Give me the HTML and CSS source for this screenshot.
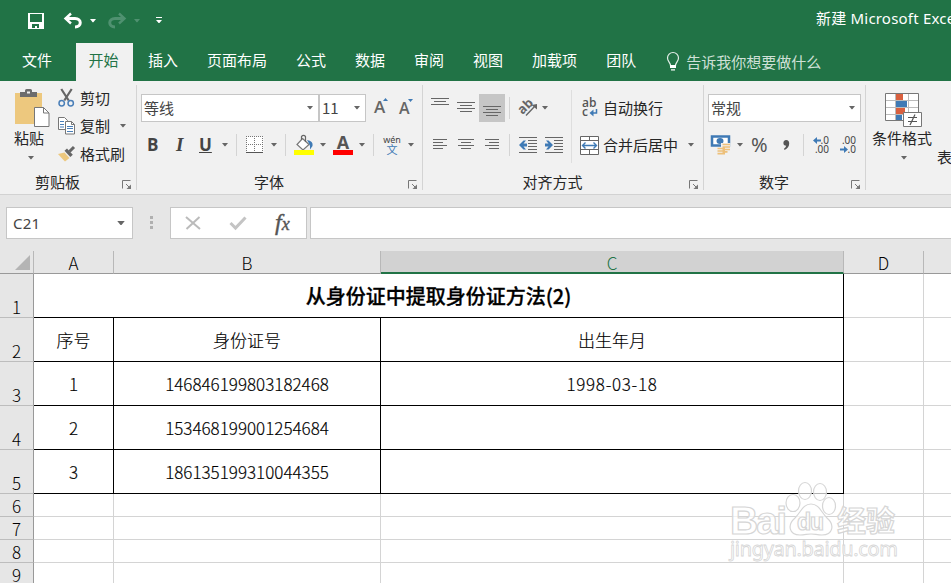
FILE: index.html
```
<!DOCTYPE html>
<html lang="zh-CN">
<head>
<meta charset="utf-8" />
<title>新建 Microsoft Excel</title>
<link rel="stylesheet" href="styles.css">
</head>
<body>
<svg width="0" height="0" class="defs">
  <symbol id="arr" viewBox="0 0 6 4"><path d="M0 0h6L3.4 3.2h-.8z"/></symbol>
  <symbol id="launch" viewBox="0 0 10 10"><path d="M.5 8.500V.5h8M4 4l4 4" fill="none" stroke="#777"/><path d="M9 4.500V9H4.500z" fill="#777"/></symbol>
</svg>

<div id="titlebar">
  <svg class="save" width="16" height="16"><path d="M0 0h16v16H0z" fill="#fff"/><path d="M2 1h12v8H2zM4 11h7v4h-2v-2H7v2H4z" fill="#217346"/></svg>
  <svg class="undo" width="19" height="16"><path d="M2 5.500h9c7 0 7 8.500 0 8.500" fill="none" stroke="#fff" stroke-width="3"/><path d="M7 .5L1.500 5.500 7 10.500" fill="none" stroke="#fff" stroke-width="2.400"/></svg>
  <svg class="arr" width="6" height="4"><use href="#arr"/></svg>
  <svg class="redo" width="19" height="16"><path d="M17 5.500H8c-7 0-7 8.500 0 8.500" fill="none" stroke="#4f9170" stroke-width="3"/><path d="M12 .5l5.500 5-5.500 5" fill="none" stroke="#4f9170" stroke-width="2.400"/></svg>
  <svg class="arr dim" width="6" height="4"><use href="#arr"/></svg>
  <svg class="more" width="6" height="7"><path d="M0 0h6v1H0zM0 3h6L3.400 6h-.8z" fill="#fff"/></svg>
  <div class="doc">新建 Microsoft Excel</div>
</div>

<ul id="tabs">
  <li class="file">文件</li>
  <li class="cur">开始</li>
  <li>插入</li>
  <li>页面布局</li>
  <li>公式</li>
  <li>数据</li>
  <li>审阅</li>
  <li>视图</li>
  <li>加载项</li>
  <li>团队</li>
  <li class="tell">
    <svg width="14" height="20"><path d="M4.500 13.500c0-3-3-4-3-7.500a5.500 5.500 0 0 1 11 0c0 3.500-3 4.500-3 7.500z" fill="none" stroke="#e4efe9" stroke-width="1.200"/><path d="M4 13h6v3H4zM5 17.200h4v1.300H5z" fill="#fff"/></svg>
    <span>告诉我你想要做什么</span>
  </li>
</ul>

<div id="ribbon">
  <!-- 剪贴板 -->
  <div class="group clip">
    <div class="body">
      <div class="big paste">
        <svg width="35" height="38"><path d="M0 4h27v31H0z" fill="#edc87e"/><path d="M5 3h5V1.500Q10 0 11.500 0h4Q17 0 17 1.500V3h5v5H5z" fill="#6d6d6d"/><path d="M12 2.500h3v2h-3z" fill="#f1f1f1"/><path d="M19.500 18.500h9l5.500 5.500v13.500H19.500z" fill="#fff" stroke="#777"/><path d="M28.500 18.500V24H34" fill="none" stroke="#777"/></svg>
        <span>粘贴</span>
        <svg class="arr" width="6" height="4"><use href="#arr"/></svg>
      </div>
      <div class="list">
        <div class="item"><svg width="17" height="18"><path d="M3.300 0l7.400 11.500M13.700 0L6.300 11.500" stroke="#666" stroke-width="2.200"/><circle cx="3.700" cy="14.200" r="2.700" fill="none" stroke="#4a7fb8" stroke-width="1.500"/><circle cx="12.700" cy="14.200" r="2.700" fill="none" stroke="#4a7fb8" stroke-width="1.500"/></svg><span>剪切</span></div>
        <div class="item"><svg width="17" height="18"><path d="M.5.5h6l3 3v9h-9z" fill="#fff" stroke="#777"/><path d="M2 4.500h4M2 7.500h4M2 10h4" stroke="#4a7fb8"/><path d="M7.500 4.500h6l3 3v9.500h-9z" fill="#fff" stroke="#777"/><path d="M13.500 4.500v3h3" fill="none" stroke="#777"/><path d="M9 9.500h6M9 11.500h6M9 14.500h6" stroke="#4a7fb8"/></svg><span>复制</span><svg class="arr" width="6" height="4"><use href="#arr"/></svg></div>
        <div class="item"><svg width="17" height="16"><path d="M0 8l6.500-1.500 5 5.500L7 15.500 4.500 13z" fill="#edc87e"/><path d="M6.500 4.800L9 2.500l5.800 6.200L12.300 11z" fill="#666"/><path d="M11.500 5.500L16 1" stroke="#666" stroke-width="3"/></svg><span>格式刷</span></div>
      </div>
    </div>
    <div class="label"><span>剪贴板</span><svg width="10" height="10"><use href="#launch"/></svg></div>
  </div>

  <!-- 字体 -->
  <div class="group font">
    <div class="body">
      <div class="row r1">
        <div class="select">等线<svg class="arr" width="6" height="4"><use href="#arr"/></svg></div>
        <div class="select size">11<svg class="arr" width="6" height="4"><use href="#arr"/></svg></div>
        <svg width="16" height="22"><text x="0" y="16" class="ga">A</text><path d="M9 4l2.500-3L14 4z" fill="#3f7ab5"/></svg>
        <svg width="16" height="22"><text x="0" y="17" class="ga sm">A</text><path d="M9 2h5l-2.500 3z" fill="#3f7ab5"/></svg>
      </div>
      <div class="row r2">
        <b class="ltr">B</b>
        <i class="ltr">I</i>
        <u class="ltr">U</u>
        <svg class="arr" width="6" height="4"><use href="#arr"/></svg>
        <div class="sep"></div>
        <svg width="18" height="18"><path d="M.5.5h17v16H.5z" fill="#fff"/><path d="M0 .5h17M0 8.500h17M.5 0v16M8.500 0v16M16.500 0v16" fill="none" stroke="#777" stroke-dasharray="1 1"/><path d="M0 16.500h17" stroke="#555"/></svg>
        <svg class="arr" width="6" height="4"><use href="#arr"/></svg>
        <div class="sep"></div>
        <svg width="20" height="20"><path d="M8.500 3.500l6.500 6-6 5.500-6-5.500z" fill="#fff" stroke="#777" stroke-width="1.200"/><path d="M7.500 5V1.500Q9.500-.8 11.500 1.500V7" fill="none" stroke="#666" stroke-width="1.200"/><path d="M13 5q6.500 1 5.500 6L16 14.500q.5-4-1-6z" fill="#3f7ab5"/><path d="M0 15h20v5H0z" fill="#ff0"/></svg>
        <svg class="arr" width="6" height="4"><use href="#arr"/></svg>
        <svg width="20" height="20"><text x="10" y="13.500" class="fa">A</text><path d="M0 15h20v5H0z" fill="#f00"/></svg>
        <svg class="arr" width="6" height="4"><use href="#arr"/></svg>
        <div class="sep"></div>
        <svg width="18" height="20"><text x="9" y="7.500" class="wen">wén</text><text x="9" y="18.500" class="wen zi">文</text></svg>
        <svg class="arr" width="6" height="4"><use href="#arr"/></svg>
      </div>
    </div>
    <div class="label"><span>字体</span><svg width="10" height="10"><use href="#launch"/></svg></div>
  </div>

  <!-- 对齐方式 -->
  <div class="group align">
    <div class="body">
      <div class="left">
        <div class="row r1">
          <svg width="18" height="28"><path d="M0 4.500h18M3 7.500h12M0 10.500h18" class="ln"/></svg>
          <svg width="18" height="28"><path d="M0 8.500h18M3 11.500h12M0 14.500h18M3 17.500h12" class="ln"/></svg>
          <div class="on"><svg width="18" height="28"><path d="M0 12.500h18M3 15.500h12M0 18.500h18M3 21.500h12" class="ln"/></svg></div>
          <div class="sep"></div>
          <svg width="20" height="22"><text x="0" y="15" class="ab" transform="rotate(-45 6 11)">ab</text><path d="M8 18.500L17 9" stroke="#666" stroke-width="1.400"/><path d="M19 7v5.500L13.500 8z" fill="#666"/></svg>
          <svg class="arr" width="6" height="4"><use href="#arr"/></svg>
        </div>
        <div class="row r2">
          <svg width="14" height="12"><path d="M0 .5h14M0 3.500h10M0 6.500h14M0 9.500h10" class="ln"/></svg>
          <svg width="16" height="12"><path d="M0 .5h16M3 3.500h10M0 6.500h16M3 9.500h10" class="ln"/></svg>
          <svg width="14" height="12"><path d="M0 .5h14M4 3.500h10M0 6.500h14M4 9.500h10" class="ln"/></svg>
          <div class="sep"></div>
          <svg width="18" height="17"><path d="M0 .5h18M9 3.500h9M9 6.500h9M9 9.500h9M9 12.500h9M0 15.500h18" class="ln"/><path d="M0 8l4.500-4.500H7L4.500 6.500H8v3H4.500L7 12.500H4.500z" fill="#3f7ab5"/></svg>
          <svg width="18" height="17"><path d="M0 .5h18M9 3.500h9M9 6.500h9M9 9.500h9M9 12.500h9M0 15.500h18" class="ln"/><path d="M8 8L3.500 3.500H1L3.500 6.500H0v3h3.500L1 12.500h2.500z" fill="#3f7ab5"/></svg>
        </div>
      </div>
      <div class="tall"></div>
      <div class="right">
        <div class="row r1">
          <svg width="18" height="20"><text x="0" y="9" class="wr">ab</text><text x="0" y="18" class="wr">c</text><path d="M14.500 11v4H9" fill="none" stroke="#3f7ab5" stroke-width="1.500"/><path d="M7.500 15l4-3.500v7z" fill="#3f7ab5"/></svg>
          <span>自动换行</span>
        </div>
        <div class="row r2">
          <svg width="19" height="19"><path d="M.5.5h18v18H.5z" fill="#fff" stroke="#666"/><path d="M0 4.500h19M0 13.500h19M9.500 0v4.500M9.500 14v5" stroke="#666"/><path d="M3 9.500h13M5.500 6.500l-3 3 3 3M13.500 6.500l3 3-3 3" fill="none" stroke="#3f7ab5" stroke-width="1.400"/></svg>
          <span>合并后居中</span>
          <svg class="arr" width="6" height="4"><use href="#arr"/></svg>
        </div>
      </div>
    </div>
    <div class="label"><span>对齐方式</span><svg width="10" height="10"><use href="#launch"/></svg></div>
  </div>

  <!-- 数字 -->
  <div class="group num">
    <div class="body">
      <div class="row r1">
        <div class="select">常规<svg class="arr" width="6" height="4"><use href="#arr"/></svg></div>
      </div>
      <div class="row r2">
        <svg width="20" height="20"><path d="M1 1.500h17v9H1z" fill="#fff" stroke="#3f7ab5" stroke-width="2.500"/><ellipse cx="9" cy="6" rx="3.500" ry="3" fill="#3f7ab5"/><path d="M10 8h9.500v9H15v2.500H6V12h4z" fill="#f1f1f1"/><path d="M11.500 9.500h7.500M11.500 12h7.500M11.500 14.500h7.500M11.500 16.800h5M6.500 13.500h7.500M6.500 16h7.500M6.500 18.700h7.500" stroke="#edc07a" stroke-width="1.700"/></svg>
        <svg class="arr" width="6" height="4"><use href="#arr"/></svg>
        <span class="pct">%</span>
        <svg width="7" height="11"><path d="M3.200 0q3 0 3 3.500 0 4-4.700 6.500L1 8.800q2-1.300 2.200-3Q.4 5.600.4 3T3.200 0z" fill="#555"/></svg>
        <div class="sep"></div>
        <svg width="17" height="20"><text x="16" y="9" class="dec">.0</text><text x="16" y="18" class="dec">.00</text><path d="M0 5.500L4 2v2.500h4v2H4V9z" fill="#3f7ab5"/></svg>
        <svg width="17" height="20"><text x="16" y="9" class="dec">.00</text><text x="16" y="18" class="dec">.0</text><path d="M8 14.500L4 11v2.500H0v2h4V18z" fill="#3f7ab5"/></svg>
      </div>
    </div>
    <div class="label"><span>数字</span><svg width="10" height="10"><use href="#launch"/></svg></div>
  </div>

  <!-- 样式 -->
  <div class="group style">
    <div class="body">
      <div class="big cond">
        <svg width="37" height="35"><path d="M.5.5h33v27H.5z" fill="#fff"/><path d="M11 0h7v7h-7zM11 14h9v7h-9z" fill="#d9603f"/><path d="M11 8h11v6H11zM11 22h6v6h-6z" fill="#3f7ab5"/><path d="M0 7.500h34M0 14.500h34M0 21.500h34M10.500 0v28M23.500 0v28" fill="none" stroke="#bbb"/><path d="M.5.5h33v27H.5z" fill="none" stroke="#777"/><path d="M18.500 19.500h18v14h-18z" fill="#fff" stroke="#777"/><path d="M23 24.500h9M23 28.500h9M30 21.500l-5 10.500" stroke="#555" stroke-width="1.200"/></svg>
        <span>条件格式</span>
        <svg class="arr" width="6" height="4"><use href="#arr"/></svg>
      </div>
      <div class="fmt">表格</div>
    </div>
  </div>
</div>

<div id="formula">
  <div class="name">C21<svg class="arr" width="8" height="5"><use href="#arr"/></svg></div>
  <svg class="dots" width="3" height="13"><path d="M0 0h3v3H0zM0 5h3v3H0zM0 10h3v3H0z" fill="#b0b0b0"/></svg>
  <div class="btns">
    <svg width="16" height="14"><path d="M1 1l14 12M14.500 1L1.500 13" stroke="#bbb" stroke-width="2"/></svg>
    <svg width="18" height="14"><path d="M1.500 7l5 5L16.500 1.500" fill="none" stroke="#c4c4c4" stroke-width="3"/></svg>
    <span class="fx">f<small>x</small></span>
  </div>
  <div class="input"></div>
</div>

<div id="sheet">
  <div class="h corner"><svg width="15" height="15"><path d="M15 0v15H0z" fill="#b4b4b4"/></svg></div>
  <div class="h">A</div><div class="h">B</div><div class="h sel">C</div><div class="h">D</div><div class="h"></div>

  <div class="n">1</div><div class="c k title">从身份证中提取身份证方法(2)</div><div class="c"></div><div class="c"></div>
  <div class="n">2</div><div class="c k">序号</div><div class="c k">身份证号</div><div class="c k">出生年月</div><div class="c"></div><div class="c"></div>
  <div class="n">3</div><div class="c k">1</div><div class="c k">146846199803182468</div><div class="c k date">1998-03-18</div><div class="c"></div><div class="c"></div>
  <div class="n">4</div><div class="c k">2</div><div class="c k">153468199001254684</div><div class="c k"></div><div class="c"></div><div class="c"></div>
  <div class="n">5</div><div class="c k">3</div><div class="c k">186135199310044355</div><div class="c k"></div><div class="c"></div><div class="c"></div>
  <div class="n">6</div><div class="c"></div><div class="c"></div><div class="c"></div><div class="c"></div><div class="c"></div>
  <div class="n">7</div><div class="c"></div><div class="c"></div><div class="c"></div><div class="c"></div><div class="c"></div>
  <div class="n">8</div><div class="c"></div><div class="c"></div><div class="c"></div><div class="c"></div><div class="c"></div>
  <div class="n">9</div><div class="c"></div><div class="c"></div><div class="c"></div><div class="c"></div><div class="c"></div>
</div>

<svg id="watermark" width="176" height="86">
  <g class="wm">
    <text x="3" y="54" class="w1" textLength="57">Bai</text>
    <ellipse cx="66" cy="23" rx="7" ry="8.500"/>
    <ellipse cx="78" cy="11" rx="6.500" ry="8.500"/>
    <ellipse cx="93" cy="12" rx="6.500" ry="8.500"/>
    <ellipse cx="102" cy="26" rx="6.500" ry="8.500"/>
    <path d="M84 24c8 0 10 8 16 14 8 7 6 17-5 17-5 0-7-1-11-1s-6 1-11 1c-11 0-13-10-5-17 6-6 8-14 16-14z"/>
    <text x="70" y="50" class="w2" textLength="27">du</text>
    <text x="110" y="52" class="w3" textLength="58">经验</text>
    <text x="3" y="76" class="w4" textLength="168">jingyan.baidu.com</text>
  </g>
</svg>
</body>
</html>
```
FILE: styles.css
```
body , ul { padding: 0; margin: 0; }
li { list-style: none; }
svg { display: block; flex: none; overflow: visible; }
body { width: 951px; height: 583px; overflow: hidden; position: relative; background: #e6e6e6; font: 15px/20px "Noto Sans CJK SC", sans-serif; color: #262626; }
.defs { position: absolute; }
.arr { fill: #666; }

/* title */
#titlebar { height: 43px; background: #217346; display: flex; align-items: flex-start; overflow: hidden; }
#titlebar svg { margin-top: 13px; }
#titlebar .save { margin-left: 28px; }
#titlebar .undo { margin-left: 20px; }
#titlebar .redo { margin-left: 11px; }
#titlebar .arr { margin: 19px 0 0 7px; fill: #fff; }
#titlebar .arr.dim { margin-left: 8px; fill: #4f9170; }
#titlebar .more { margin: 17px 0 0 16px; }
#titlebar .doc { margin: 8px 0 0 654px; color: #fff; white-space: nowrap; letter-spacing: .2px; font-family: "Noto Sans", "Noto Sans CJK SC", sans-serif; }

/* tabs */
#tabs { height: 38px; background: #217346; display: flex; line-height: 33px; color: #fff; }
#tabs li { margin-left: 29px; white-space: nowrap; }
#tabs .file { margin-left: 22px; }
#tabs .cur { margin-left: 24px; margin-right: -14px; width: 55px; padding-right: 2px; text-align: center; background: #f1f1f1; color: #217346; }
#tabs .tell { margin-left: 30px; display: flex; color: #cfe0d7; }
#tabs .tell svg { margin-top: 9px; }
#tabs .tell span { margin-left: 6px; padding-top: 2px; }

/* ribbon */
#ribbon { height: 113px; background: #f1f1f1; border-bottom: 1px solid #d2d2d2; display: flex; overflow: hidden; }
.group { height: 105px; margin-top: 4px; border-right: 1px solid #d4d4d4; box-sizing: border-box; flex: none; white-space: nowrap; }
.group .body { height: 87px; }
.group .label { height: 20px; display: flex; align-items: flex-start; }
.group .label span { flex: 1; text-align: center; }
.group .label svg { margin: 8px 4px 0 7px; }
.clip { width: 137px; }
.font { width: 286px; }
.align { width: 281px; }
.num { width: 162px; }
.style { width: 120px; border: none; }
.clip .body, .align .body, .style .body { display: flex; }
.big { display: flex; flex-direction: column; align-items: flex-start; }
.paste { width: 43px; margin-left: 14px; }
.paste svg:first-child { margin: 4px 0 0 1px; }
.big span { margin-top: 1px; }
.big .arr { margin: 8px 0 0 14px; }
.list { margin: -1px 0 0 1px; }
.item { height: 28px; display: flex; align-items: center; }
.item span { margin-left: 5px; }
.item .arr { margin-left: 10px; }

.row { height: 28px; display: grid; align-items: center; }
.r1 { padding-top: 9px; }
.r2 { padding-top: 9px; }
.select { height: 28px; box-sizing: border-box; border: 1px solid #c6c6c6; background: #fff; display: flex; align-items: center; justify-content: space-between; padding: 0 5px 0 2px; color: #444; }
.sep { width: 1px; height: 22px; background: #d4d4d4; }
.font .r1 { grid-template-columns: 178px 55px 25px 15px; padding-left: 4px; }
.font .size { width: 47px; }
.font .r2 { grid-template-columns: 28px 24px 23px 14px 10px 25px 14px 9px 26px 13px 26px 14px 10px 25px 8px; padding-left: 10px; }
.ltr { font: bold 17px/20px "Open Sans", sans-serif; color: #444; }
i.ltr { font: italic bold 19px/20px "Liberation Serif", serif; margin-left: 1px; }
.ga { font: 600 17px "Open Sans", sans-serif; fill: #666; }
.ga.sm { font-size: 16px; }
.fa { font: bold 18px "Open Sans", sans-serif; fill: #555; text-anchor: middle; }
.wen { font: 9px "Noto Sans", sans-serif; fill: #444; text-anchor: middle; }
.wen.zi { font: 11px "Noto Sans CJK SC", sans-serif; fill: #3f7ab5; }

.ln { stroke: #666; fill: none; }
.align .left { width: 148px; }
.align .left .r1 { grid-template-columns: 26px 22px 30px 9px 24px 6px; padding-left: 8px; }
.align .left .r2 { grid-template-columns: 25px 27px 24px 10px 26px 18px; padding-left: 10px; }
.on { width: 26px; height: 28px; background: #c6c6c6; }
.on svg { margin-left: 4px; }
.tall { width: 1px; height: 73px; margin-top: 5px; background: #dedede; }
.align .right .row { grid-template-columns: 23px 85px 6px; padding-left: 8px; }
.align .right .r1 svg { margin-left: 2px; }
.ab { font: bold 13px "Open Sans", sans-serif; fill: #666; }
.wr { font: 600 12px "Open Sans", sans-serif; fill: #555; }

.num .r1 { padding-left: 4px; }
.num .select { width: 153px; }
.num .r2 { grid-template-columns: 26px 14px 32px 20px 10px 27px 17px; padding-left: 7px; }
.pct { font: 20px/20px "Noto Sans", sans-serif; color: #555; }
.dec { font: 10px "Noto Sans", sans-serif; fill: #444; text-anchor: end; }
.cond { width: 65px; margin-left: 6px; }
.cond svg:first-child { margin: 8px 0 0 13px; }
.cond span { margin-top: 0; }
.cond .arr { margin-left: 29px; }
.fmt { margin-top: 62px; }

/* formula bar */
#formula { height: 56px; display: flex; align-items: flex-start; }
#formula div { height: 32px; box-sizing: border-box; border: 1px solid #c6c6c6; background: #fff; margin-top: 12px; }
#formula .name { width: 127px; margin-left: 6px; padding: 0 7px 0 6px; display: flex; align-items: center; justify-content: space-between; color: #444; letter-spacing: .2px; font-family: "Noto Sans", sans-serif; }
#formula .dots { margin: 21px 0 0 17px; }
#formula .btns { width: 137px; margin-left: 17px; display: flex; align-items: center; padding-left: 14px; }
#formula .btns svg + svg { margin-left: 28px; }
.fx { margin-left: 28px; font: italic 24px/24px "Liberation Serif", serif; color: #555; -webkit-text-stroke: .4px #555; }
.fx small { font-size: 18px; }
#formula .input { flex: 1; margin-left: 3px; border-right: none; }

/* cells */
#sheet { display: grid; grid-template-columns: 34px 80px 267px 463px 80px 28px; grid-template-rows: 23px repeat(5, 44px) repeat(4, 23px); font-size: 17px; font-weight: 300; color: #000; }
#sheet div { box-sizing: border-box; text-align: center; }
.h { border-right: 1px solid #b8b8b8; border-bottom: 1px solid #999; background: #e6e6e6; line-height: 24px; }
.h.sel { background: #d2d2d2; border-bottom: 2px solid #217346; color: #217346; }
.h.corner { padding: 4px 0 0 15px; }
.n { border-right: 1px solid #999; border-bottom: 1px solid #bdbdbd; background: #e6e6e6; display: flex; align-items: flex-end; justify-content: center; line-height: 20px; }
.c { border-right: 1px solid #d4d4d4; border-bottom: 1px solid #d4d4d4; background: #fff; line-height: 44px; -webkit-text-stroke: .15px #000; }
.c.k { border-color: #000; }
.date { letter-spacing: .7px; }
.title { grid-column: span 3; font-size: 20px; font-weight: 500; -webkit-text-stroke: .3px #000; }

#watermark { position: absolute; left: 727px; top: 480px; }
.wm { fill: #fff; fill-opacity: .7; stroke: #d6d6d6; stroke-width: 1.200; }
.w1 { font: bold 39px "Liberation Sans", sans-serif; }
.w2 { font: bold 23px "Liberation Sans", sans-serif; }
.w3 { font: bold 29px "Noto Sans CJK SC", sans-serif; }
.w4 { font: 20px "Noto Sans", sans-serif; stroke-width: .8; }
```
